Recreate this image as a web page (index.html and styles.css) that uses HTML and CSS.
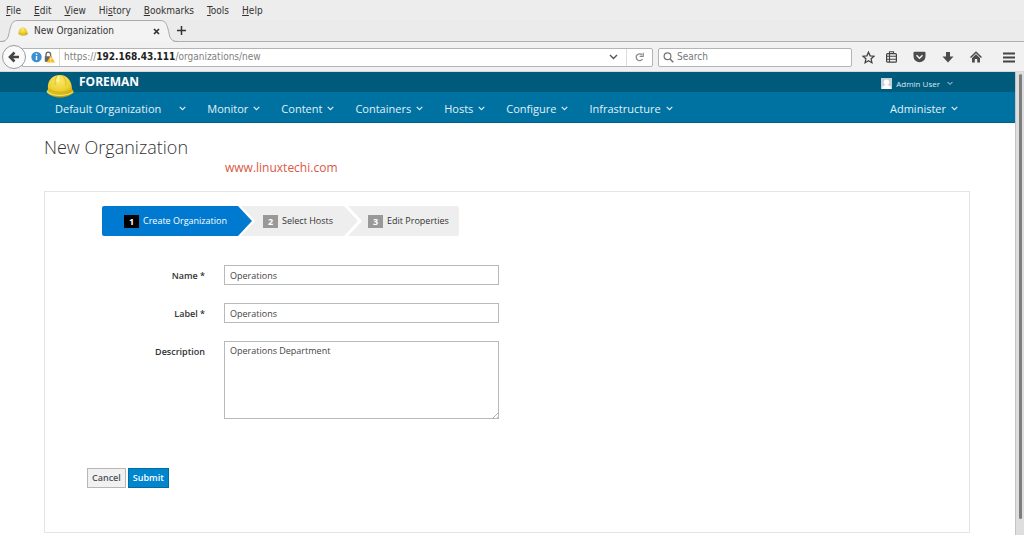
FILE: index.html
```html
<!DOCTYPE html>
<html lang="en">
<head>
<meta charset="utf-8">
<title>New Organization</title>
<link rel="stylesheet" href="styles.css">
</head>
<body>
<svg class="defs" width="0" height="0" aria-hidden="true">
  <defs>
    <radialGradient id="shell" cx="45%" cy="25%" r="75%">
      <stop offset="0" stop-color="#fbe96a"/><stop offset=".6" stop-color="#ecd02f"/><stop offset="1" stop-color="#bd9c12"/>
    </radialGradient>
    <symbol id="helmet" viewBox="0 0 28 24">
      <path d="M2 15C1 7 6 1 14 1c7 0 12 6 12 14l2 3c-2 3-8 5.500-14 5.500S2 21 .5 17.500z" fill="url(#shell)"/>
      <path d="M1 17.500C7 22.500 20 22.500 27 18" fill="none" stroke="#f6e35a" stroke-width="1.200"/>
      <path d="M3 15c5 4 16 4.500 22 1" fill="none" stroke="#c9a91c" stroke-width=".7"/>
      <path d="M11 1.500C9 5 9 8 9 11M17 1.500c2 3 3 6 3 10" fill="none" stroke="#d6b826" stroke-width=".8"/>
      <path d="M13 2c-1 2-1.500 4-1.500 6" fill="none" stroke="#fff7ad" stroke-width="1.500"/>
    </symbol>
    <symbol id="chev" viewBox="0 0 7 5"><path d="M.7.800 3.500 3.600 6.300.800" fill="none" stroke="currentColor" stroke-width="1.100"/></symbol>
  </defs>
</svg>

<nav class="menubar" aria-label="Browser menu">
  <button><u>F</u>ile</button>
  <button><u>E</u>dit</button>
  <button><u>V</u>iew</button>
  <button>Hi<u>s</u>tory</button>
  <button><u>B</u>ookmarks</button>
  <button><u>T</u>ools</button>
  <button><u>H</u>elp</button>
</nav>

<div class="tabstrip">
  <div class="tab">
    <svg class="tab-shape" viewBox="0 0 178 22" aria-hidden="true"><path d="M0 21.500C9 21.500 8 16 10 9 12 2 13 .5 19 .5H159C165 .5 166 2 168 9 170 16 169 21.500 178 21.500" fill="#f3f3f3" stroke="#a9a9a9"/><path d="M5 22h168" stroke="#f3f3f3" stroke-width="2"/></svg>
    <svg class="tab-icon" aria-hidden="true"><use href="#helmet"/></svg>
    <span class="tab-title">New Organization</span>
    <button class="tab-close" aria-label="Close tab"><svg width="7" height="7" viewBox="0 0 7 7"><path d="M1 1l5 5M6 1L1 6" stroke="#333" stroke-width="1.700"/></svg></button>
  </div>
  <button class="tab-new" aria-label="New tab"><svg width="9" height="9" viewBox="0 0 9 9"><path d="M4.500 0v9M0 4.500h9" stroke="#333" stroke-width="1.500"/></svg></button>
</div>

<div class="toolbar">
  <button class="back" aria-label="Back"><svg width="12" height="12" viewBox="0 0 12 12"><path d="M6.500 1.500L2 6l4.500 4.500M2 6h9" fill="none" stroke="#444" stroke-width="2.600"/></svg></button>
  <div class="field url">
    <svg width="24" height="12" viewBox="0 0 24 12" aria-hidden="true">
      <circle cx="5.500" cy="6" r="5.200" fill="#3c8fd0"/><path d="M5.500 5v4M5.500 2.600v1.400" stroke="#fff" stroke-width="1.400"/>
      <path d="M15 6V3.500a2.300 2.300 0 014.600 0V6" fill="none" stroke="#666" stroke-width="1.300"/><rect x="13.800" y="5.300" width="6.500" height="5.500" fill="#666"/>
      <path d="M19.800 4.500L24 11.500H15.600z" fill="#fbb91c"/><path d="M19.800 6.800v2.200M19.800 9.800v1" stroke="#fff"/>
    </svg>
    <span class="rule"></span>
    <span class="address">https://<b>192.168.43.111</b>/organizations/new</span>
    <button class="history" aria-label="Show history"><svg width="9" height="6" viewBox="0 0 9 6"><path d="M1 1l3.500 3.500L8 1" fill="none" stroke="#555" stroke-width="1.400"/></svg></button>
    <span class="rule"></span>
    <button aria-label="Reload"><svg width="9" height="10" viewBox="0 0 9 10"><path d="M7.500 7A3.400 3.400 0 117 2.800" fill="none" stroke="#888" stroke-width="1.300"/><path d="M8.200.800V4.400H4.600" fill="none" stroke="#888" stroke-width="1.200"/></svg></button>
  </div>
  <label class="field search">
    <svg width="11" height="11" viewBox="0 0 11 11" aria-hidden="true"><circle cx="4.500" cy="4.300" r="3.400" fill="none" stroke="#777" stroke-width="1.200"/><path d="M7 7l3.300 3.300" stroke="#777" stroke-width="1.600"/></svg>
    <input type="text" placeholder="Search" aria-label="Search">
  </label>
  <div class="tools">
    <button aria-label="Bookmark this page"><svg width="13" height="13" viewBox="0 0 13 13"><path d="M6.500 1.200l1.600 3.600 3.900.4-2.900 2.600.8 3.900-3.400-2-3.400 2 .8-3.900L1 5.200l3.900-.4z" fill="none" stroke="#444" stroke-width="1.300"/></svg></button>
    <button aria-label="Bookmarks"><svg width="11" height="12" viewBox="0 0 11 12"><rect x=".6" y="2.600" width="9.800" height="8.600" rx="1" fill="none" stroke="#444" stroke-width="1.200"/><path d="M3.500 2.500V.700h4v1.800M1 5.300h9M1 8.200h9M3.500 3v8" fill="none" stroke="#444" stroke-width="1.100"/></svg></button>
    <button aria-label="Pocket"><svg width="13" height="12" viewBox="0 0 13 12"><path d="M1.500.800h10q1 0 1 1v3.500a6 6 0 01-12 0V1.800q0-1 1-1z" fill="#4c4c4c"/><path d="M3.500 4.300l3 3 3-3" fill="none" stroke="#f3f3f3" stroke-width="1.500"/></svg></button>
    <button aria-label="Downloads"><svg width="12" height="12" viewBox="0 0 12 12"><path d="M4 1h4v4.500h3.500L6 11.500.5 5.500H4z" fill="#4c4c4c"/></svg></button>
    <button aria-label="Home"><svg width="12" height="12" viewBox="0 0 12 12"><path d="M.5 6.500L6 1.300l5.500 5.200" fill="none" stroke="#4c4c4c" stroke-width="1.500"/><path d="M2 7l4-3.800L10 7v4.500H7.200V8H4.800v3.500H2z" fill="#4c4c4c"/></svg></button>
    <button aria-label="Open menu"><svg width="12" height="11" viewBox="0 0 12 11"><path d="M0 1.500h12M0 5.500h12M0 9.500h12" stroke="#444" stroke-width="2"/></svg></button>
  </div>
</div>

<div class="viewport">
  <div class="page">
    <header class="brandbar">
      <svg class="logo" aria-hidden="true"><use href="#helmet"/></svg>
      <span class="brand">FOREMAN</span>
      <button class="user">
        <svg width="11" height="11" viewBox="0 0 11 11" aria-hidden="true"><rect width="11" height="11" fill="#c9d3d6"/><circle cx="5.500" cy="4.200" r="2.700" fill="#fff"/><path d="M1 11c0-3 2-4 4.500-4S10 8 10 11z" fill="#fff"/></svg>
        <span>Admin User</span>
        <svg class="chev" aria-hidden="true"><use href="#chev"/></svg>
      </button>
    </header>
    <nav class="mainnav" aria-label="Main">
      <button class="org">Default Organization<svg class="chev"><use href="#chev"/></svg></button>
      <button>Monitor<svg class="chev"><use href="#chev"/></svg></button>
      <button>Content<svg class="chev"><use href="#chev"/></svg></button>
      <button>Containers<svg class="chev"><use href="#chev"/></svg></button>
      <button>Hosts<svg class="chev"><use href="#chev"/></svg></button>
      <button>Configure<svg class="chev"><use href="#chev"/></svg></button>
      <button>Infrastructure<svg class="chev"><use href="#chev"/></svg></button>
      <button class="administer">Administer<svg class="chev"><use href="#chev"/></svg></button>
    </nav>
    <main>
      <h1>New Organization</h1>
      <p class="site">www.linuxtechi.com</p>
      <form class="card">
        <ol class="wizard">
          <li class="step active"><b>1</b>Create Organization</li>
          <li class="step middle"><b>2</b>Select Hosts</li>
          <li class="step last"><b>3</b>Edit Properties</li>
        </ol>
        <div class="fields">
          <label for="name">Name *</label>
          <input id="name" type="text" value="Operations">
          <label for="label">Label *</label>
          <input id="label" type="text" value="Operations">
          <label for="description">Description</label>
          <textarea id="description">Operations Department</textarea>
        </div>
        <div class="actions">
          <button type="button">Cancel</button>
          <button type="submit" class="primary">Submit</button>
        </div>
      </form>
    </main>
  </div>
  <div class="scrollbar"><div class="thumb"></div></div>
</div>
</body>
</html>
```
FILE: styles.css
```css
* { box-sizing: border-box; }
body {
  margin: 0;
  min-height: 100vh;
  display: flex;
  flex-direction: column;
  background: #fff;
  color: #333;
  font: 10px/14px "DejaVu Sans Condensed", "DejaVu Sans", sans-serif;
}
button {
  padding: 0;
  border: 0;
  background: none;
  color: inherit;
  font: inherit;
  white-space: nowrap;
}
svg { display: block; flex: none; }
.defs { position: absolute; }

.menubar {
  display: flex;
  gap: 13px;
  height: 20px;
  padding: 1px 0 0 6px;
  align-items: center;
  background: #ededed;
}
.menubar u { text-underline-offset: 1px; }

.tabstrip {
  display: flex;
  align-items: center;
  height: 22px;
  background: #ebebeb;
  border-bottom: 1px solid #b0b0b0;
}
.tab {
  position: relative;
  display: flex;
  align-items: center;
  width: 178px;
  height: 22px;
  padding: 1px 18px 0;
}
.tab-shape { position: absolute; left: 0; top: 0; width: 178px; height: 22px; }
.tab-icon { position: relative; width: 10px; height: 9px; }
.tab-title { position: relative; flex: 1; margin-left: 6px; }
.tab-close { position: relative; }
.tab-new { margin-left: -1px; }

.toolbar {
  display: flex;
  align-items: center;
  height: 30px;
  padding: 1px 9px 0 2px;
  background: #f1f1f1;
  border-bottom: 1px solid #d8d8d8;
}
.back {
  position: relative;
  z-index: 1;
  display: grid;
  place-items: center;
  width: 24px;
  height: 24px;
  border: 1px solid #9a9a9a;
  border-radius: 50%;
  background: #fafafa;
}
.field {
  display: flex;
  align-items: center;
  height: 19px;
  border: 1px solid #b4b4b4;
  background: #fff;
}
.url {
  flex: 1;
  margin-left: -4px;
  padding: 0 4px 0 8px;
  gap: 4px;
  border-radius: 0 2px 2px 0;
}
.url button { margin: 0 4px; }
.url .history { margin: 0 4px 0 0; }
.rule { width: 1px; height: 17px; background: #dcdcdc; }
.address { flex: 1; color: #808080; }
.address b { color: #222; }
.search { width: 194px; margin-left: 5px; padding: 0 4px; gap: 3px; border-radius: 2px; }
.search input {
  flex: 1;
  min-width: 0;
  padding: 0;
  border: 0;
  outline: 0;
  background: none;
  font: inherit;
}
.search input::placeholder { color: #777; }
.tools { display: flex; align-items: center; gap: 16px; margin-left: 10px; }
.tools button:first-child { margin-right: -5px; }
.tools button:last-child { margin-left: 5px; }

.viewport { flex: 1; display: flex; font-family: "Open Sans", sans-serif; }
.page { flex: 1; min-width: 0; }
.scrollbar {
  width: 9px;
  padding: 2px 2px 16px 3px;
  background: #dedede;
  border-left: 1px solid #c4c4c4;
  display: flex;
}
.thumb { flex: 1; border-radius: 2px; background: #7e7e7e; }

.brandbar {
  position: relative;
  z-index: 1;
  display: flex;
  height: 20px;
  padding: 0 62px 0 46px;
  background: #005a7c;
  color: #fff;
}
.logo { width: 28px; height: 24px; margin-top: 2px; }
.brand { margin-left: 5px; font-size: 12px; line-height: 19px; font-weight: 700; }
.user {
  display: flex;
  align-items: center;
  gap: 4px;
  height: 23px;
  margin-left: auto;
  font-size: 8px;
  color: #d9e9f0;
}
.chev { width: 7px; height: 5px; }
.user .chev { width: 6px; margin-left: 3px; }

.mainnav {
  display: flex;
  gap: 21px;
  height: 31px;
  padding: 3px 57px 0 55px;
  background: #0072a2;
  border-bottom: 1px solid #00618a;
  color: #e3f0f6;
  font-size: 11px;
}
.mainnav button { display: flex; align-items: center; gap: 5px; }
.mainnav .org { gap: 18px; }
.mainnav .administer { margin-left: auto; }

main { padding: 12px 45px 2px 44px; }
h1 { margin: 0; font-size: 18px; line-height: 24px; font-weight: 300; }
.site { margin: 1px 0 16px 181px; font: 12px/15px "Open Sans", sans-serif; color: #dc5744; }

.card {
  padding: 14px 42px 44px;
  border: 1px solid #e4e4e4;
  font-size: 9px;
}
.wizard { display: flex; margin: 0 0 29px 15px; padding: 0; list-style: none; }
.step {
  display: flex;
  align-items: center;
  height: 30px;
  padding: 0 25px 0 22px;
  background: #eee;
}
.step b {
  width: 15px;
  margin-right: 4px;
  background: #999;
  color: #fff;
  line-height: 13px;
  text-align: center;
}
.active {
  background: #0079d0;
  color: #fff;
  border-radius: 2px 0 0 2px;
  clip-path: polygon(0 0, calc(100% - 14px) 0, 100% 50%, calc(100% - 14px) 100%, 0 100%);
}
.active b { background: #000; }
.middle {
  margin-left: -11px;
  clip-path: polygon(0 0, calc(100% - 14px) 0, 100% 50%, calc(100% - 14px) 100%, 0 100%, 14px 50%);
}
.last {
  margin-left: -10px;
  padding: 0 10px 0 20px;
  border-radius: 0 2px 2px 0;
  clip-path: polygon(0 0, 100% 0, 100% 100%, 0 100%, 14px 50%);
}

.fields {
  display: grid;
  grid-template-columns: 118px minmax(0, 275px);
  column-gap: 19px;
  row-gap: 18px;
}
.fields label { padding-top: 1px; text-align: right; line-height: 19px; font-weight: 600; }
.fields input, .fields textarea {
  padding: 0 5px;
  border: 1px solid #b9b9b9;
  border-radius: 0;
  background: #fff;
  color: #444;
  font: 9px/16px "Open Sans", sans-serif;
}
.fields input { height: 20px; }
.fields textarea { height: 78px; padding-top: 1px; }
.fields textarea::-webkit-resizer {
  background:
    linear-gradient(135deg, #fff 72%, transparent 72%),
    repeating-linear-gradient(135deg, #fff 0 2px, #b5b5b5 2px 3px);
}

.actions { display: flex; gap: 2px; margin-top: 49px; }
.actions button {
  height: 20px;
  padding: 0 4px;
  border: 1px solid #b7b7b7;
  background: #f1f1f1;
  color: #4d5258;
  font-weight: 600;
}
.actions .primary { background: #0085cf; border-color: #006e9c; color: #fff; }
```
